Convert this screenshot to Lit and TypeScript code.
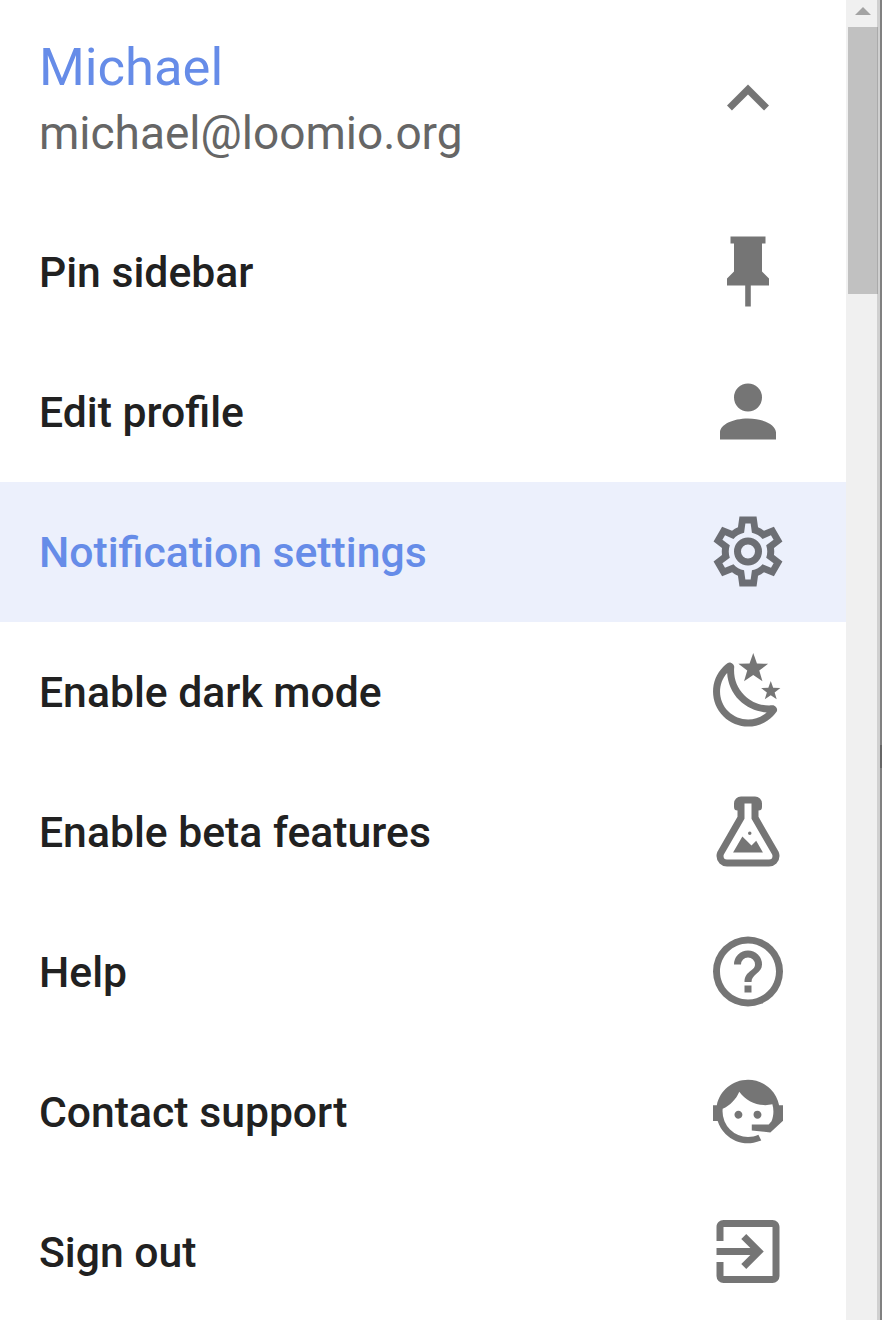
import { LitElement, html, css } from "lit";
import { customElement, property } from "lit/decorators.js";

const icons: Record<string, string> = {
  chevronUp: "M7.41,15.41L12,10.83L16.59,15.41L18,14L12,8L6,14L7.41,15.41Z",
  pin: "M16,12V4H17V2H7V4H8V12L6,14V16H11.2V22H12.8V16H18V14L16,12Z",
  account:
    "M12,4A4,4 0 0,1 16,8A4,4 0 0,1 12,12A4,4 0 0,1 8,8A4,4 0 0,1 12,4M12,14C16.42,14 20,15.79 20,18V20H4V18C4,15.79 7.58,14 12,14Z",
  cog: "M12,8A4,4 0 0,1 16,12A4,4 0 0,1 12,16A4,4 0 0,1 8,12A4,4 0 0,1 12,8M12,10A2,2 0 0,0 10,12A2,2 0 0,0 12,14A2,2 0 0,0 14,12A2,2 0 0,0 12,10M9.56,22L9.13,18.93C8.5,18.68 7.96,18.34 7.44,17.94L4.6,19.08L2.16,14.87L4.57,12.97L4.5,12L4.57,11L2.16,9.13L4.6,4.92L7.44,6.05C7.96,5.66 8.5,5.32 9.13,5.07L9.56,2H14.44L14.87,5.07C15.5,5.32 16.04,5.66 16.56,6.05L19.4,4.92L21.84,9.13L19.43,11L19.5,12L19.43,13L21.84,14.87L19.4,19.08L16.56,17.95C16.04,18.34 15.5,18.68 14.87,18.93L14.44,22H9.56M11.25,4L10.88,6.61C9.68,6.86 8.62,7.5 7.85,8.39L5.44,7.35L4.69,8.65L6.8,10.2C6.4,11.37 6.4,12.64 6.8,13.8L4.68,15.36L5.43,16.66L7.86,15.62C8.63,16.5 9.68,17.14 10.87,17.38L11.24,20H12.76L13.13,17.39C14.32,17.14 15.37,16.5 16.14,15.62L18.57,16.66L19.32,15.36L17.2,13.81C17.6,12.64 17.6,11.37 17.2,10.2L19.31,8.65L18.56,7.35L16.15,8.39C15.38,7.5 14.32,6.86 13.12,6.62L12.75,4H11.25Z",
  night:
    "M17.75,4.09L15.22,6.03L16.13,9.09L13.5,7.28L10.87,9.09L11.78,6.03L9.25,4.09L12.44,4L13.5,1L14.56,4L17.75,4.09M21.25,11L19.61,12.25L20.2,14.23L18.5,13.06L16.8,14.23L17.39,12.25L15.75,11L17.81,10.95L18.5,9L19.19,10.95L21.25,11M18.97,15.95C19.8,15.87 20.69,17.05 20.16,17.8C19.84,18.25 19.5,18.67 19.08,19.07C15.17,23 8.84,23 4.94,19.07C1.03,15.17 1.03,8.83 4.94,4.93C5.34,4.53 5.76,4.17 6.21,3.85C6.96,3.32 8.14,4.21 8.06,5.04C7.79,7.9 8.75,10.87 10.95,13.06C13.14,15.26 16.1,16.22 18.97,15.95M17.33,17.97C14.5,17.81 11.7,16.64 9.53,14.5C7.36,12.31 6.2,9.5 6.04,6.68C3.23,9.82 3.34,14.64 6.35,17.66C9.37,20.67 14.19,20.78 17.33,17.97Z",
  flask:
    "M5,19A1,1 0 0,0 6,20H18A1,1 0 0,0 19,19C19,18.79 18.93,18.59 18.82,18.43L13,8.35V4H11V8.35L5.18,18.43C5.07,18.59 5,18.79 5,19M6,22A3,3 0 0,1 3,19C3,18.4 3.18,17.84 3.5,17.37L9,7.81V6A1,1 0 0,1 8,5V4A2,2 0 0,1 10,2H14A2,2 0 0,1 16,4V5A1,1 0 0,1 15,6V7.81L20.5,17.37C20.82,17.84 21,18.4 21,19A3,3 0 0,1 18,22H6M13,16L14.34,14.66L16.27,18H7.73L10.39,13.39L13,16M12.5,12A0.5,0.5 0 0,1 13,12.5A0.5,0.5 0 0,1 12.5,13A0.5,0.5 0 0,1 12,12.5A0.5,0.5 0 0,1 12.5,12Z",
  help: "M11,18H13V16H11V18M12,2A10,10 0 0,0 2,12A10,10 0 0,0 12,22A10,10 0 0,0 22,12A10,10 0 0,0 12,2M12,20C7.59,20 4,16.41 4,12C4,7.59 7.59,4 12,4C16.41,4 20,7.59 20,12C20,16.41 16.41,20 12,20M12,6A4,4 0 0,0 8,10H10A2,2 0 0,1 12,8A2,2 0 0,1 14,10C14,12 11,11.75 11,15H13C13,12.75 16,12.5 16,10A4,4 0 0,0 12,6Z",
  agent:
    "M18.72,14.76C19.07,13.91 19.26,13 19.26,12C19.26,11.28 19.15,10.59 18.96,9.95C18.31,10.1 17.63,10.18 16.92,10.18C13.86,10.18 11.15,8.67 9.5,6.34C8.61,8.5 6.91,10.26 4.77,11.22C4.73,11.47 4.73,11.74 4.73,12A7.27,7.27 0 0,0 12,19.27C13.05,19.27 14.06,19.04 14.97,18.63C15.54,19.72 15.8,20.26 15.78,20.26C14.14,20.81 12.87,21.08 12,21.08C9.58,21.08 7.27,20.13 5.57,18.42C4.53,17.38 3.76,16.11 3.33,14.73H2V10.18H3.09C3.93,6.04 7.6,2.92 12,2.92C14.4,2.92 16.71,3.87 18.42,5.58C19.69,6.84 20.54,8.45 20.89,10.18H22V14.67H22V14.69L22,14.73H21.94L18.38,18L13.08,17.4V15.73H17.91L18.72,14.76M9.27,11.77C9.57,11.77 9.86,11.89 10.07,12.11C10.28,12.32 10.4,12.61 10.4,12.91C10.4,13.21 10.28,13.5 10.07,13.71C9.86,13.92 9.57,14.04 9.27,14.04C8.64,14.04 8.13,13.54 8.13,12.91C8.13,12.28 8.64,11.77 9.27,11.77M14.72,11.77C15.35,11.77 15.85,12.28 15.85,12.91C15.85,13.54 15.35,14.04 14.72,14.04C14.09,14.04 13.58,13.54 13.58,12.91A1.14,1.14 0 0,1 14.72,11.77Z",
  exit: "M19,3H5C3.89,3 3,3.89 3,5V9H5V5H19V19H5V15H3V19A2,2 0 0,0 5,21H19A2,2 0 0,0 21,19V5C21,3.89 20.1,3 19,3M10.08,15.58L11.5,17L16.5,12L11.5,7L10.08,8.41L12.67,11H3V13H12.67L10.08,15.58Z",
};

@customElement("menu-icon")
class MenuIcon extends LitElement {
  @property() name = "";
  static styles = css`
    :host { display: block; flex: none; width: 84px; height: 84px; color: rgba(0, 0, 0, 0.54); }
    svg { display: block; width: 84px; height: 84px; fill: currentColor; }
  `;
  render() {
    return html`<svg viewBox="0 0.14 24 24" aria-hidden="true"><path d=${icons[this.name]}></path></svg>`;
  }
}

const items = [
  { label: "Pin sidebar", icon: "pin" },
  { label: "Edit profile", icon: "account" },
  { label: "Notification settings", icon: "cog", active: true },
  { label: "Enable dark mode", icon: "night" },
  { label: "Enable beta features", icon: "flask" },
  { label: "Help", icon: "help" },
  { label: "Contact support", icon: "agent" },
  { label: "Sign out", icon: "exit" },
];

@customElement("app-root")
class AppRoot extends LitElement {
  static styles = css`
    :host { display: flex; width: 882px; height: 1320px; overflow: hidden; background: #fff; font-family: Roboto, sans-serif; }
    .panel { flex: 1; display: flex; flex-direction: column; }
    .row { flex: none; box-sizing: border-box; display: flex; align-items: center; justify-content: space-between; height: 140px; padding: 0 56px 0 39px; color: #212121; }
    .header { height: 202px; padding-bottom: 4px; }
    .identity { padding-top: 2px; }
    .name { font-size: 52.5px; line-height: 66px; color: #668ce8; }
    .email { font-size: 46px; line-height: 66px; color: #666; }
    .label { font-size: 42.7px; line-height: 60px; font-weight: 500; white-space: nowrap; }
    .active { background: #ecf0fc; color: #668ce8; }
    .track { flex: none; box-sizing: border-box; width: 31px; padding-left: 2px; background: #f0f0f0; }
    .arrow { display: block; width: 29px; height: 27px; }
    .thumb { height: 267px; background: #c1c1c1; }
    .edge { flex: none; width: 3px; background: #d0d0d0; }
    .edge-thumb { height: 267px; margin-top: 27px; width: 1px; background: #aaa; }
    .frame { flex: none; width: 2px; background: #808080; }
    .mark { height: 23px; margin-top: 745px; background: #666; }
  `;
  render() {
    return html`
      <nav class="panel">
        <div class="row header">
          <div class="identity">
            <div class="name">Michael</div>
            <div class="email">michael@loomio.org</div>
          </div>
          <menu-icon name="chevronUp"></menu-icon>
        </div>
        ${items.map(
          (i) => html`<div class="row ${i.active ? "active" : ""}">
            <span class="label">${i.label}</span>
            <menu-icon name=${i.icon}></menu-icon>
          </div>`
        )}
      </nav>
      <div class="track">
        <svg class="arrow" viewBox="0 0 29 27"><path d="M7 15L15 7L23 15Z" fill="#a3a3a3"></path></svg>
        <div class="thumb"></div>
      </div>
      <div class="edge"><div class="edge-thumb"></div></div>
      <div class="frame"><div class="mark"></div></div>
    `;
  }
}
